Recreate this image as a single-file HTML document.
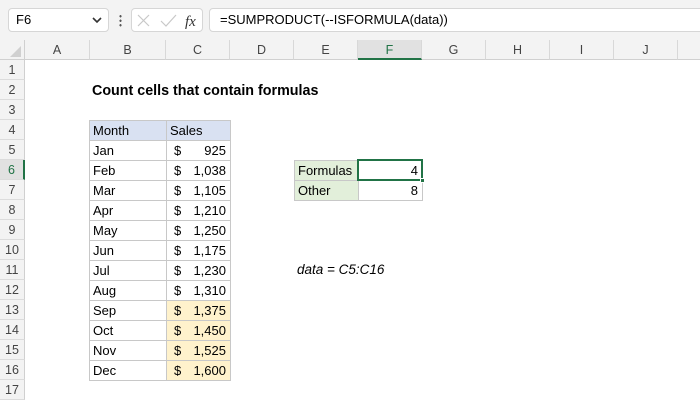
<!DOCTYPE html>
<html><head><meta charset="utf-8"><style>
*{margin:0;padding:0;box-sizing:border-box}
body{width:700px;height:400px;overflow:hidden;background:#fff;font-family:"Liberation Sans",Calibri,sans-serif;font-size:13px;color:#000;position:relative}
.a{position:absolute}
.top{left:0;top:0;width:700px;height:40px;background:#f3f3f3}
.box{background:#fff;border:1px solid #d6d6d6;border-radius:4px}
.ch{top:40px;height:20px;background:#f3f3f3;border-right:1px solid #d8d8d8;border-bottom:1px solid #d0d0d0;text-align:center;line-height:20px;color:#444;font-size:12.5px}
.rh{left:0;width:25px;height:20px;background:#f3f3f3;border-bottom:1px solid #dcdcdc;border-right:1px solid #d0d0d0;text-align:center;line-height:20px;color:#444;font-size:12.5px}
.c{height:21px;border:1px solid #c8c8c8;line-height:19px;padding:0 3px;white-space:nowrap}
.d{position:absolute;left:7px}
.n{position:absolute;right:4px}
</style></head><body>
<div class="a top"></div>
<div class="a box" style="left:8px;top:8px;width:101px;height:24px;line-height:22px;padding-left:7px;font-size:13px">F6</div>
<svg class="a" style="left:92px;top:17px" width="10" height="7"><path d="M1 1 L5 5 L9 1" fill="none" stroke="#333" stroke-width="1.6"/></svg>
<div class="a" style="left:119px;top:14px;width:3px;height:13px;background:radial-gradient(circle,#555 1px,transparent 1.3px) 0 0/3px 4.5px"></div>
<div class="a box" style="left:131px;top:8px;width:72px;height:24px"></div>
<svg class="a" style="left:136px;top:13px" width="66" height="16"><path d="M2 2 L13 13 M13 2 L2 13" stroke="#c8c8c8" stroke-width="1.2"/><path d="M25 8 L30 13 L40 2" fill="none" stroke="#c8c8c8" stroke-width="1.2"/><text x="49" y="13" font-family="Liberation Serif,serif" font-style="italic" font-size="15" fill="#333">fx</text></svg>
<div class="a box" style="left:209px;top:8px;width:500px;height:24px;line-height:22px;padding-left:10px;font-size:13px">=SUMPRODUCT(--ISFORMULA(data))</div>
<div class="a" style="left:0;top:40px;width:25px;height:20px;background:#f3f3f3;border-right:1px solid #d0d0d0;border-bottom:1px solid #d0d0d0"></div>
<svg class="a" style="left:10px;top:46px" width="12" height="12"><path d="M11 0 L11 11 L0 11Z" fill="#d0d0d0"/></svg>
<div class="a ch" style="left:25px;width:65px">A</div>
<div class="a ch" style="left:90px;width:76px">B</div>
<div class="a ch" style="left:166px;width:64px">C</div>
<div class="a ch" style="left:230px;width:64px">D</div>
<div class="a ch" style="left:294px;width:64px">E</div>
<div class="a ch" style="left:358px;width:64px;background:#e1e1e1;border-bottom:2px solid #217346;color:#217346">F</div>
<div class="a ch" style="left:422px;width:64px">G</div>
<div class="a ch" style="left:486px;width:64px">H</div>
<div class="a ch" style="left:550px;width:64px">I</div>
<div class="a ch" style="left:614px;width:64px">J</div>
<div class="a ch" style="left:678px;width:30px"></div>
<div class="a rh" style="top:60px">1</div><div class="a rh" style="top:80px">2</div><div class="a rh" style="top:100px">3</div><div class="a rh" style="top:120px">4</div><div class="a rh" style="top:140px">5</div>
<div class="a rh" style="top:160px;background:#e1e1e1;border-right:2px solid #217346;color:#217346">6</div>
<div class="a rh" style="top:180px">7</div><div class="a rh" style="top:200px">8</div><div class="a rh" style="top:220px">9</div><div class="a rh" style="top:240px">10</div><div class="a rh" style="top:260px">11</div><div class="a rh" style="top:280px">12</div><div class="a rh" style="top:300px">13</div><div class="a rh" style="top:320px">14</div><div class="a rh" style="top:340px">15</div><div class="a rh" style="top:360px">16</div><div class="a rh" style="top:380px">17</div>
<div class="a" style="left:92px;top:81px;font-weight:bold;font-size:14.3px;line-height:20px">Count cells that contain formulas</div>

<div class="a c" style="left:89px;top:120px;width:78px;background:#d9e1f2">Month</div>
<div class="a c" style="left:166px;top:120px;width:65px;background:#d9e1f2">Sales</div>
<div class="a c" style="left:89px;top:140px;width:78px">Jan</div><div class="a c" style="left:166px;top:140px;width:65px"><span class="d">$</span><span class="n">925</span></div>
<div class="a c" style="left:89px;top:160px;width:78px">Feb</div><div class="a c" style="left:166px;top:160px;width:65px"><span class="d">$</span><span class="n">1,038</span></div>
<div class="a c" style="left:89px;top:180px;width:78px">Mar</div><div class="a c" style="left:166px;top:180px;width:65px"><span class="d">$</span><span class="n">1,105</span></div>
<div class="a c" style="left:89px;top:200px;width:78px">Apr</div><div class="a c" style="left:166px;top:200px;width:65px"><span class="d">$</span><span class="n">1,210</span></div>
<div class="a c" style="left:89px;top:220px;width:78px">May</div><div class="a c" style="left:166px;top:220px;width:65px"><span class="d">$</span><span class="n">1,250</span></div>
<div class="a c" style="left:89px;top:240px;width:78px">Jun</div><div class="a c" style="left:166px;top:240px;width:65px"><span class="d">$</span><span class="n">1,175</span></div>
<div class="a c" style="left:89px;top:260px;width:78px">Jul</div><div class="a c" style="left:166px;top:260px;width:65px"><span class="d">$</span><span class="n">1,230</span></div>
<div class="a c" style="left:89px;top:280px;width:78px">Aug</div><div class="a c" style="left:166px;top:280px;width:65px"><span class="d">$</span><span class="n">1,310</span></div>
<div class="a c" style="left:89px;top:300px;width:78px">Sep</div><div class="a c" style="left:166px;top:300px;width:65px;background:#fff2cc"><span class="d">$</span><span class="n">1,375</span></div>
<div class="a c" style="left:89px;top:320px;width:78px">Oct</div><div class="a c" style="left:166px;top:320px;width:65px;background:#fff2cc"><span class="d">$</span><span class="n">1,450</span></div>
<div class="a c" style="left:89px;top:340px;width:78px">Nov</div><div class="a c" style="left:166px;top:340px;width:65px;background:#fff2cc"><span class="d">$</span><span class="n">1,525</span></div>
<div class="a c" style="left:89px;top:360px;width:78px">Dec</div><div class="a c" style="left:166px;top:360px;width:65px;background:#fff2cc"><span class="d">$</span><span class="n">1,600</span></div>

<div class="a c" style="left:294px;top:160px;width:65px;background:#e2efda">Formulas</div>
<div class="a c" style="left:358px;top:160px;width:65px"><span class="n">4</span></div>
<div class="a c" style="left:294px;top:180px;width:65px;background:#e2efda">Other</div>
<div class="a c" style="left:358px;top:180px;width:65px"><span class="n">8</span></div>
<div class="a" style="left:357px;top:159px;width:66px;height:22px;border:2px solid #217346"></div>
<div class="a" style="left:420px;top:178px;width:5px;height:5px;background:#217346;border:1px solid #fff"></div>
<div class="a" style="left:297px;top:260px;line-height:20px;font-style:italic;font-size:13.5px">data = C5:C16</div>
</body></html>
